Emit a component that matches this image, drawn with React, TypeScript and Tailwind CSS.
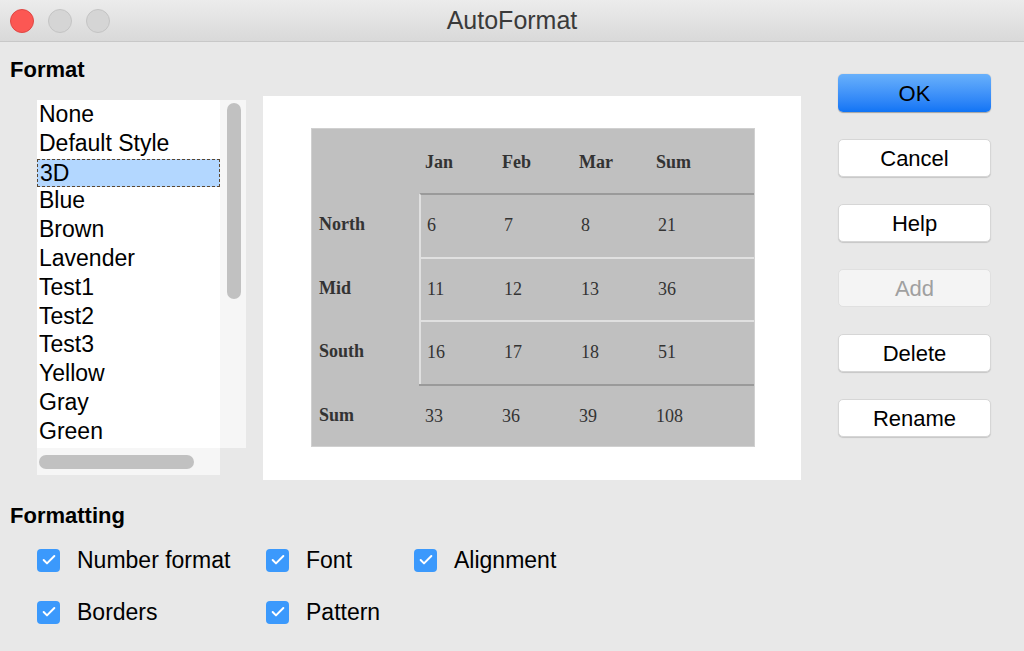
import { Check } from "lucide-react";

const items = ["None", "Default Style", "3D", "Blue", "Brown", "Lavender", "Test1", "Test2", "Test3", "Yellow", "Gray", "Green"];
const buttons = ["OK", "Cancel", "Help", "Add", "Delete", "Rename"];

const rows = [
  { label: "North", v: ["6", "7", "8", "21"] },
  { label: "Mid", v: ["11", "12", "13", "36"] },
  { label: "South", v: ["16", "17", "18", "51"] },
];

function Cell({ children, bold }: { children: React.ReactNode; bold?: boolean }) {
  return <div className={`w-[77px] shrink-0 pl-[6px] ${bold ? "font-bold" : ""}`}>{children}</div>;
}

function Box({ label }: { label: string }) {
  return (
    <div className="flex h-[24px] items-center gap-[17px]">
      <span className="flex h-[23px] w-[23px] shrink-0 items-center justify-center rounded-[4px] bg-[#3b99fc]">
        <Check className="h-[16px] w-[16px] text-white" strokeWidth={3} />
      </span>
      <span>{label}</span>
    </div>
  );
}

export default function App() {
  return (
    <div className="flex h-[651px] w-[1024px] flex-col overflow-hidden bg-[#e8e8e8] text-[23px] text-black" style={{ fontFamily: '"Liberation Sans", Arial, sans-serif' }}>
      {/* title bar */}
      <div className="relative flex h-[42px] shrink-0 items-center justify-center border-b border-[#c8c8c8] bg-gradient-to-b from-[#ececec] to-[#d9d9d9]">
        <div className="absolute left-[10px] top-[9px] flex gap-[14px]">
          <span className="h-[24px] w-[24px] rounded-full bg-[#fc5753] border border-[#df4744]" />
          <span className="h-[24px] w-[24px] rounded-full bg-[#d5d5d5] border border-[#c4c4c4]" />
          <span className="h-[24px] w-[24px] rounded-full bg-[#d5d5d5] border border-[#c4c4c4]" />
        </div>
        <span className="text-[25px] text-[#3a3a3a]">AutoFormat</span>
      </div>

      <div className="flex">
        <div className="flex flex-col">
          <div className="pl-[10px] pt-[16px] text-[22px] font-bold leading-[24px]">Format</div>
          <div className="mt-[18px] flex gap-[17px] pl-[37px]">
            {/* list */}
            <div className="flex flex-col">
              <div className="flex">
                <div className="flex h-[348px] w-[183px] flex-col bg-white pt-[1px]">
                  {items.map((it) => (
                    <div key={it} className={`h-[28.8px] shrink-0 pl-[2px] leading-[27px] ${it === "3D" ? "border border-dashed border-[#5a4630] bg-[#b3d7ff] pl-[1px] leading-[25px]" : ""}`}>
                      {it}
                    </div>
                  ))}
                </div>
                <div className="h-[348px] w-[26px] bg-[#f6f6f6] px-[7px] pt-[3px]">
                  <div className="h-[196px] w-[14px] rounded-full bg-[#c1c1c1]" />
                </div>
              </div>
              <div className="flex">
                <div className="h-[27px] w-[183px] bg-[#f6f6f6] px-[2px] pt-[7px]">
                  <div className="h-[14px] w-[155px] rounded-full bg-[#c1c1c1]" />
                </div>
              </div>
            </div>
            {/* preview */}
            <div className="-mt-[4px] h-[384px] w-[538px] bg-white pl-[48px] pt-[32px]">
              <div className="h-[319px] w-[444px] border border-[#d0d0d0] bg-[#c0c0c0] text-[18px] text-[#333]" style={{ fontFamily: '"Liberation Serif", serif' }}>
                <div className="flex h-[64px] items-center pt-[2px] font-bold">
                  <div className="w-[107px]" />
                  <Cell>Jan</Cell><Cell>Feb</Cell><Cell>Mar</Cell><Cell>Sum</Cell>
                </div>
                {rows.map((r, i) => (
                  <div key={r.label} className="flex h-[63.5px] items-center">
                    <div className="w-[107px] pl-[7px] font-bold">{r.label}</div>
                    <div className={`flex h-full flex-1 items-center border-l-2 border-[#e0e0e0] ${i === 0 ? "border-t-2 border-t-[#9a9a9a]" : "border-t-2 border-t-[#e0e0e0]"}`}>
                      {r.v.map((v) => <Cell key={v}>{v}</Cell>)}
                    </div>
                  </div>
                ))}
                <div className="flex h-[64px] items-center">
                  <div className="w-[107px] pl-[7px] font-bold">Sum</div>
                  <div className="flex h-full flex-1 items-center border-t-2 border-[#9a9a9a]">
                    <Cell>33</Cell><Cell>36</Cell><Cell>39</Cell><Cell>108</Cell>
                  </div>
                </div>
              </div>
            </div>
          </div>
        </div>

        {/* buttons */}
        <div className="ml-[37px] flex flex-col gap-[27px] pt-[32px] text-[22px]">
          {buttons.map((b) => (
            <div
              key={b}
              className={`flex h-[38px] w-[153px] items-center justify-center rounded-[5px] ${
                b === "OK"
                  ? "bg-gradient-to-b from-[#68b0fb] to-[#0f74f5] shadow-[0_0.5px_1px_rgba(0,0,0,0.3)]"
                  : b === "Add"
                  ? "bg-[#f4f4f4] text-[#a0a0a0] border border-[#e0e0e0]"
                  : "bg-white border border-[#d6d6d6] shadow-[0_1px_1px_rgba(0,0,0,0.15)]"
              }`}
            >
              {b}
            </div>
          ))}
        </div>
      </div>

      <div className="pl-[10px] pt-[24px] text-[22px] font-bold leading-[24px]">Formatting</div>
      <div className="mt-[20px] flex pl-[37px]">
        <div className="flex w-[229px] flex-col gap-[28px]"><Box label="Number format" /><Box label="Borders" /></div>
        <div className="flex w-[148px] flex-col gap-[28px]"><Box label="Font" /><Box label="Pattern" /></div>
        <div className="flex flex-col gap-[28px]"><Box label="Alignment" /></div>
      </div>
    </div>
  );
}
